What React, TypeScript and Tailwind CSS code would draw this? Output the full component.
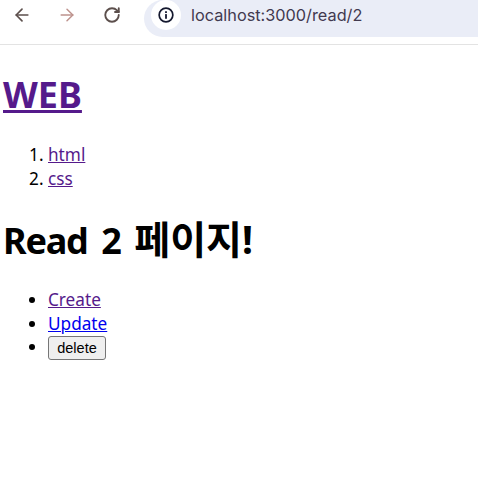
import { ArrowLeft, ArrowRight, RotateCw } from 'lucide-react';

export default function App() {
  return (
    <div className="h-[498px] w-[478px] overflow-hidden bg-white font-['Noto_Sans','Noto_Sans_CJK_KR',sans-serif] text-black">
      {/* Browser toolbar */}
      <div className="flex h-[45px] items-start border-b border-[#e3e3e3] pl-[12px]">
        <ArrowLeft className="mt-[5px] h-[20px] w-[20px] text-[#5c4f4c]" strokeWidth={2} />
        <ArrowRight className="ml-[25px] mt-[5px] h-[20px] w-[20px] text-[#bd928d]" strokeWidth={1.75} />
        <RotateCw className="ml-[26px] mr-[1px] mt-[6px] h-[18px] w-[18px] text-[#5c4f4c]" strokeWidth={2.5} />
        <div className="ml-[22px] flex h-[37px] flex-1 items-start rounded-l-[19px] bg-[#eaedf7] pl-[7px]">
          <div className="flex h-[30px] w-[30px] items-center justify-center rounded-full bg-white">
            <svg viewBox="0 0 20 20" className="h-[18px] w-[18px]" fill="none">
              <circle cx="10" cy="10" r="7.6" stroke="#14182e" strokeWidth="1.9" />
              <rect x="9" y="9" width="2" height="5.2" fill="#14182e" />
              <rect x="9" y="5.8" width="2" height="2" fill="#14182e" />
            </svg>
          </div>
          <span className="ml-[10px] font-['Inter','Noto_Sans',sans-serif] text-[16.3px] leading-[30px] text-[#42394f]">localhost:3000/read/2</span>
        </div>
      </div>

      {/* Page */}
      <div className="px-[3px]">
        <h1 className="mt-[25px] text-[36px] font-bold leading-[50px]">
          <a href="#" className="text-[#551a8b] underline">WEB</a>
        </h1>
        <ol className="mt-[23px] list-decimal pl-[45px] text-[17.2px] leading-[24px]">
          <li><a href="#" className="text-[#551a8b] underline decoration-1">html</a></li>
          <li><a href="#" className="text-[#551a8b] underline decoration-1">css</a></li>
        </ol>
        <h2 className="mt-[24px] text-[36px] font-bold leading-[48px] tracking-[-1.2px] [word-spacing:5.5px]">
          Read 2 <span className="text-[39px] tracking-normal">페이지!</span>
        </h2>
        <ul className="mt-[23px] list-disc pl-[45px] text-[17.2px] leading-[24px]">
          <li><a href="#" className="text-[#551a8b] underline decoration-1">Create</a></li>
          <li><a href="#" className="text-[#0000ee] underline decoration-1">Update</a></li>
          <li>
            <button className="-mt-[1px] flex h-[24px] w-[58px] items-center justify-center rounded-[3px] border border-[#767676] bg-[#efefef] font-['Liberation_Sans',sans-serif] text-[14.5px] leading-none">
              delete
            </button>
          </li>
        </ul>
      </div>
    </div>
  );
}
